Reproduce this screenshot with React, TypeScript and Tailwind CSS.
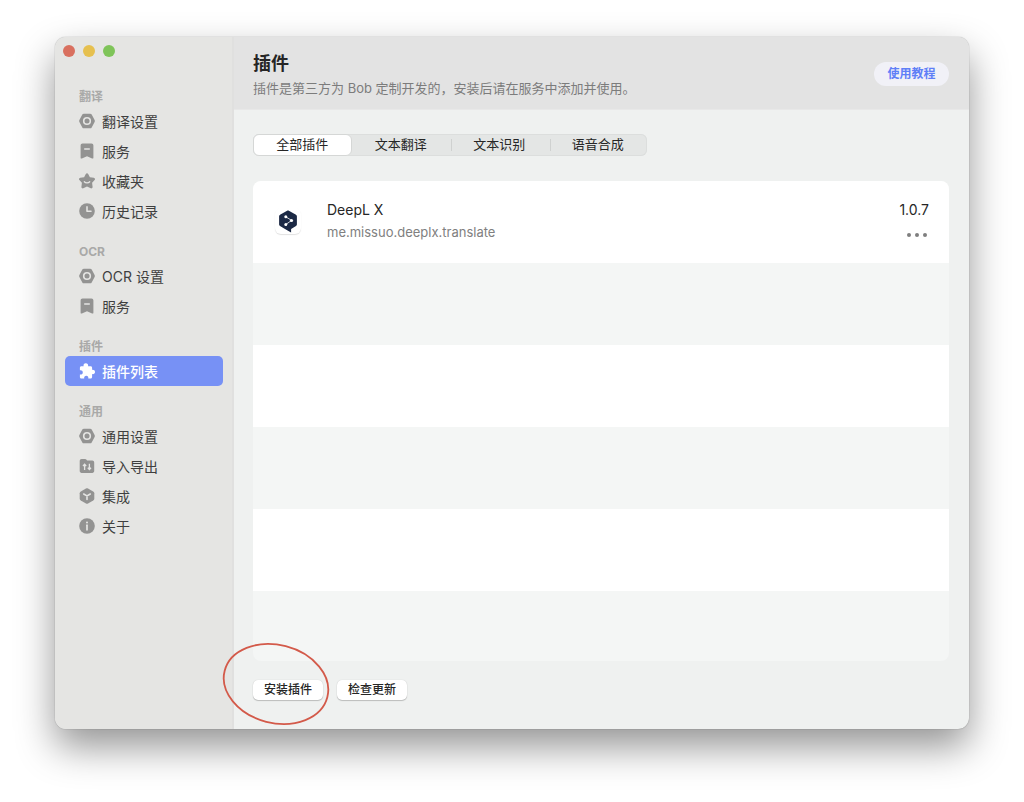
import { useState, type ReactNode } from 'react';

type IconName = 'nut' | 'bookmark' | 'star' | 'clock' | 'puzzle' | 'folder' | 'cube' | 'info';

const icons: Record<IconName, ReactNode> = {
  nut: (
    <>
      <path
        fill="currentColor"
        fillRule="evenodd"
        d="M4.9.7h6.200c.7 0 1.300.3 1.600.9l2.900 5.300c.4.7.4 1.500 0 2.200l-2.900 5.300c-.3.600-.9.900-1.600.9H4.900c-.7 0-1.300-.3-1.600-.9L.4 9.100c-.4-.7-.4-1.500 0-2.200l2.900-5.300c.3-.6.9-.9 1.600-.9ZM8 3.900a4.100 4.100 0 1 0 0 8.200 4.100 4.100 0 0 0 0-8.200Z"
      />
      <circle cx="8" cy="8" r="2.500" fill="currentColor" />
    </>
  ),
  bookmark: (
    <path
      fill="currentColor"
      fillRule="evenodd"
      d="M3.500.6h9c1.100 0 1.900.8 1.900 1.900v12.200c0 .8-.7 1.100-1.300.7L8 13.200l-5.100 2.200c-.6.4-1.300.1-1.300-.7V2.500c0-1.100.8-1.900 1.900-1.900ZM5.200 5.200v1.600h5.600V5.200H5.200Z"
    />
  ),
  star: (
    <>
      <path
        fill="currentColor"
        d="M6.800 1c.5-1 1.900-1 2.400 0l1.700 3.200 3.900.6c1.200.2 1.600 1.500.8 2.300l-2.500 2.600.5 4.200c.1 1.200-.9 1.900-1.900 1.400L8 13.600l-3.700 1.700c-1 .5-2-.2-1.900-1.400l.5-4.200L.4 7.100C-.4 6.300 0 5 1.200 4.800l3.900-.6L6.800 1Z"
      />
      <path d="M5.300 8.800c1.300 1.500 4.100 1.500 5.400 0" fill="none" stroke="#e5e5e3" strokeWidth="1.300" strokeLinecap="round" />
    </>
  ),
  clock: (
    <>
      <circle cx="8" cy="8" r="7.800" fill="currentColor" />
      <path d="M8 3.900v4.300h4" fill="none" stroke="#e5e5e3" strokeWidth="1.600" strokeLinecap="round" strokeLinejoin="round" />
    </>
  ),
  puzzle: (
    <path
      fill="currentColor"
      d="M4.600 3.300c-.4-1.700.6-3 2.200-3s2.700 1.300 2.300 3h2.500c.9 0 1.500.6 1.500 1.500v2.100c1.600-.3 2.900.6 2.900 2.100s-1.300 2.500-2.900 2.100v2.900c0 .9-.6 1.500-1.500 1.500H9.300c.3-1.600-.6-2.700-2-2.700s-2.400 1.100-2.100 2.700H2.400c-.9 0-1.500-.6-1.500-1.500v-2.500c1.700.3 2.900-.6 2.900-2.100S2.600 7 .9 7.300V4.800c0-.9.6-1.500 1.500-1.500h2.200Z"
    />
  ),
  folder: (
    <>
      <path
        fill="currentColor"
        d="M2.600 1h3.500c.5 0 .9.2 1.200.6l.8 1h5.200c1.100 0 1.900.8 1.900 1.900V13c0 1.100-.8 1.900-1.900 1.900H2.600c-1.100 0-1.900-.8-1.900-1.900V2.900C.7 1.800 1.500 1 2.600 1Z"
      />
      <path
        d="M5.600 12V6.300M4 8l1.600-1.800L7.200 8M10.400 5.700v5.700M8.800 9.700l1.600 1.800 1.600-1.800"
        fill="none"
        stroke="#e5e5e3"
        strokeWidth="1.300"
      />
    </>
  ),
  cube: (
    <>
      <path
        fill="currentColor"
        d="M7 .5c.6-.3 1.400-.3 2 0l5.200 2.900c.7.4 1.100 1 1.100 1.800v5.600c0 .8-.4 1.400-1.100 1.800L9 15.500c-.6.3-1.400.3-2 0l-5.200-2.900C1.100 12.200.7 11.600.7 10.800V5.200c0-.8.4-1.400 1.100-1.800L7 .5Z"
      />
      <path d="M4.700 6 8 7.900 11.300 6M8 7.900v3.600" fill="none" stroke="#e5e5e3" strokeWidth="1.600" strokeLinecap="round" />
    </>
  ),
  info: (
    <>
      <circle cx="8" cy="8" r="7.800" fill="currentColor" />
      <circle cx="8" cy="4.600" r="1" fill="#e5e5e3" />
      <path d="M8 7.200v4.600" stroke="#e5e5e3" strokeWidth="1.700" strokeLinecap="round" />
    </>
  ),
};

const sections: { title: string; items: { label: string; icon: IconName; active?: boolean }[] }[] = [
  {
    title: '翻译',
    items: [
      { label: '翻译设置', icon: 'nut' },
      { label: '服务', icon: 'bookmark' },
      { label: '收藏夹', icon: 'star' },
      { label: '历史记录', icon: 'clock' },
    ],
  },
  {
    title: 'OCR',
    items: [
      { label: 'OCR 设置', icon: 'nut' },
      { label: '服务', icon: 'bookmark' },
    ],
  },
  { title: '插件', items: [{ label: '插件列表', icon: 'puzzle', active: true }] },
  {
    title: '通用',
    items: [
      { label: '通用设置', icon: 'nut' },
      { label: '导入导出', icon: 'folder' },
      { label: '集成', icon: 'cube' },
      { label: '关于', icon: 'info' },
    ],
  },
];

const tabs = ['全部插件', '文本翻译', '文本识别', '语音合成'];

const plugins = [{ name: 'DeepL X', id: 'me.missuo.deeplx.translate', version: '1.0.7' }];

function Sidebar() {
  return (
    <aside className="w-[179px] flex-none border-r-2 border-[#e0e0df] bg-[#e5e5e3] pt-2 pr-[9px] pl-[10px]">
      <div className="-ml-0.5 flex gap-2">
        <span className="size-3 rounded-full bg-[#d9705f]" />
        <span className="size-3 rounded-full bg-[#e6c04f]" />
        <span className="size-3 rounded-full bg-[#7fc459]" />
      </div>
      <nav className="mt-[31px] flex flex-col gap-[17px]">
        {sections.map(section => (
          <section key={section.title}>
            <h2 className="pl-[14px] text-[12px] leading-[18px] font-bold text-[#a9a9a8]">{section.title}</h2>
            {section.items.map(item => (
              <a
                key={item.label}
                href="#"
                className={`flex h-[30px] items-center gap-[7px] rounded-[5px] pl-[14px] text-[14px] ${
                  item.active ? 'bg-[#7791f5] font-medium text-white' : 'text-[#3f3f3f]'
                }`}
              >
                <svg viewBox="0 0 16 16" className={`size-4 ${item.active ? 'text-white' : 'text-[#939392]'}`} aria-hidden="true">
                  {icons[item.icon]}
                </svg>
                {item.label}
              </a>
            ))}
          </section>
        ))}
      </nav>
    </aside>
  );
}

function PluginLogo() {
  return (
    <span className="flex size-[26px] items-center justify-center rounded-md bg-white shadow-[0_1px_1px_rgba(0,0,0,0.12)]">
      <svg viewBox="0 0 20 23" className="h-[23px] w-5" aria-hidden="true">
        <path
          fill="#1c2945"
          d="M9.100.7c.5-.3 1.300-.3 1.800 0l7.100 4c.6.3.9.9.9 1.500v8.400c0 .6-.3 1.200-.9 1.500l-4.900 2.800v3.600l-4-2.300-7.100-4.100c-.6-.3-.9-.9-.9-1.500V6.200c0-.6.3-1.200.9-1.500l7.100-4Z"
        />
        <path d="m7.800 6.800 5.800 3.600-5.800 4.100" fill="none" stroke="#fff" strokeWidth="0.800" />
        <circle cx="7.800" cy="6.800" r="1.500" fill="#fff" />
        <circle cx="13.500" cy="10.500" r="1.600" fill="#fff" />
        <circle cx="7.800" cy="14.500" r="1.500" fill="#fff" />
      </svg>
    </span>
  );
}

export default function App() {
  const [tab, setTab] = useState(tabs[0]);

  return (
    <div className="flex min-h-screen bg-white px-[55px] pt-[37px] pb-[73px] font-['Inter','Noto_Sans_CJK_SC',sans-serif]">
      <div className="flex flex-1 overflow-hidden rounded-[11px] bg-[#eff1f0] shadow-[0_0_1px_rgba(0,0,0,0.5),0_18px_38px_rgba(0,0,0,0.42)]">
        <Sidebar />
        <main className="flex min-w-0 flex-1 flex-col">
          <header className="flex h-[73px] items-center justify-between border-b border-[#e8e8e8] bg-[#e3e3e3] pt-0.5 pr-5 pl-[19px]">
            <div className="pt-1">
              <h1 className="text-[18px] leading-6 font-bold text-[#252525]">插件</h1>
              <p className="text-[13px] leading-6 text-[#7c7c7c]">插件是第三方为 Bob 定制开发的，安装后请在服务中添加并使用。</p>
            </div>
            <button className="h-6 w-[75px] rounded-full bg-[#f1f1f7] text-[12px] font-bold text-[#5f7ff7]">使用教程</button>
          </header>

          <div className="flex flex-1 flex-col pt-6 pr-5 pb-[29px] pl-[19px]">
            <div className="grid h-[22px] w-[394px] grid-cols-4 rounded-md bg-[#e4e6e5] ring-1 ring-[#dcdedd] ring-inset">
              {tabs.map((t, i) => (
                <button
                  key={t}
                  onClick={() => setTab(t)}
                  className={`relative h-[22px] rounded-md border pb-0.5 text-[13px] leading-[18px] text-[#262626] ${
                    t === tab ? 'border-[#d5d7d6] bg-white' : 'border-transparent'
                  }`}
                >
                  {i > 1 && <span className="absolute top-1 left-0 h-3 w-px bg-[#cfd1d0]" />}
                  {t}
                </button>
              ))}
            </div>

            <ul className="mt-[25px] flex flex-1 flex-col overflow-hidden rounded-lg bg-[#f4f6f5]">
              {plugins.map(p => (
                <li key={p.id} className="flex h-[82px] items-center bg-white pr-5 pb-0.5 pl-[22px]">
                  <PluginLogo />
                  <div className="ml-[26px] flex-1">
                    <h3 className="text-[14px] leading-[22px] text-[#262626]">{p.name}</h3>
                    <p className="text-[13px] leading-[22px] text-[#808080]">{p.id}</p>
                  </div>
                  <div className="flex flex-col items-end">
                    <span className="text-[14px] leading-[22px] text-[#262626]">{p.version}</span>
                    <button aria-label="更多" className="flex h-[22px] items-center gap-1 pt-1.5 pr-0.5">
                      <span className="size-1 rounded-full bg-[#7f7f7f]" />
                      <span className="size-1 rounded-full bg-[#7f7f7f]" />
                      <span className="size-1 rounded-full bg-[#7f7f7f]" />
                    </button>
                  </div>
                </li>
              ))}
              {/* empty striped rows */}
              <li className="h-[82px]" />
              <li className="h-[82px] bg-white" />
              <li className="h-[82px]" />
              <li className="h-[82px] bg-white" />
            </ul>

            <div className="mt-[19px] flex gap-[14px]">
              <div className="relative flex">
                <button className="h-5 w-[70px] rounded-[5px] bg-white text-[12px] leading-5 font-medium text-[#262626] shadow-[0_0_1px_rgba(0,0,0,0.2),0_1px_1px_rgba(0,0,0,0.2)]">
                  安装插件
                </button>
                <svg
                  viewBox="0 0 110 86"
                  className="pointer-events-none absolute -top-[39px] -left-8 h-[86px] w-[110px] max-w-none"
                  aria-hidden="true"
                >
                  <ellipse cx="55" cy="43" rx="53" ry="39" transform="rotate(14.500 55 43)" fill="none" stroke="#d35a4a" strokeWidth="1.800" />
                </svg>
              </div>
              <button className="h-5 w-[70px] rounded-[5px] bg-white text-[12px] leading-5 font-medium text-[#262626] shadow-[0_0_1px_rgba(0,0,0,0.2),0_1px_1px_rgba(0,0,0,0.2)]">
                检查更新
              </button>
            </div>
          </div>
        </main>
      </div>
    </div>
  );
}
